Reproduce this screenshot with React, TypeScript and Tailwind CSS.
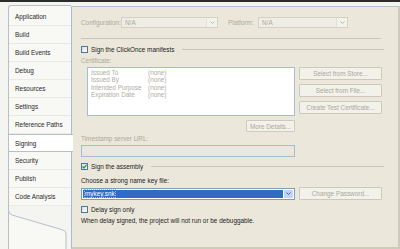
const font = { fontFamily: '"Liberation Sans", Arial, sans-serif' };

const tabs = [
  "Application",
  "Build",
  "Build Events",
  "Debug",
  "Resources",
  "Settings",
  "Reference Paths",
  "Signing",
  "Security",
  "Publish",
  "Code Analysis",
];

const CheckBox = ({ checked }: { checked?: boolean }) => (
  <div className="flex h-[7px] w-[7px] items-center justify-center border border-[#4a76a8] bg-gradient-to-br from-[#dcdcd4] to-white">
    {checked && (
      <svg width="5" height="5" viewBox="0 0 5 5">
        <path d="M0.5 2.5 L2 4 L4.5 1" stroke="#21a121" strokeWidth="1.2" fill="none" />
      </svg>
    )}
  </div>
);

const Arrow = ({ color = "#b9b7ac" }: { color?: string }) => (
  <svg width="5" height="3" viewBox="0 0 5 3">
    <path d="M0.5 0.5 L2.5 2.5 L4.5 0.5" stroke={color} strokeWidth="1" fill="none" />
  </svg>
);

const DisabledSelect = ({ w }: { w: string }) => (
  <div className={`flex h-[11px] ${w} items-center border border-[#d3d0c4] bg-[#efede5]`}>
    <span className="flex-1 pl-[3px] text-[#aca899]">N/A</span>
    <div className="flex h-full w-[11px] items-center justify-center border-l border-[#e2e0d7] bg-[#f3f2ec]">
      <Arrow />
    </div>
  </div>
);

const Btn = ({ label, w = "w-[83px]", h = "h-[13px]" }: { label: string; w?: string; h?: string }) => (
  <div className={`flex ${h} ${w} items-center justify-center rounded-[1px] border border-[#cdcabd] bg-[#f2f1ea] text-[#aca899]`}>
    {label}
  </div>
);

export default function App() {
  return (
    <div className="h-[249px] w-[400px] overflow-hidden bg-white text-[6.4px] leading-[7px]" style={font}>
      <div className="h-[2px] bg-[#2b2b2b]" />
      <div className="flex h-[247px] bg-[#f4f4f1]">
        {/* tab strip */}
        <div className="relative w-[71px] pl-[8px] pt-[3px]">
          <div className="h-full rounded-tl-[3px] border-l border-t border-[#b7bfc9] bg-[#f8f8f5]">
            <div className="pt-[2px]">
              {tabs.map((t) => (
                <div
                  key={t}
                  className={
                    t === "Signing"
                      ? "relative z-10 -mr-[2px] flex h-[18px] items-center border-y border-[#b7bfc9] bg-white pl-[6px] text-[#1a1a1a]"
                      : "flex h-[18px] items-center border-b border-[#ebeae4] pl-[6px] text-[#2a2a2a]"
                  }
                >
                  {t}
                </div>
              ))}
            </div>
          </div>
          <svg className="absolute left-0 top-[204px]" width="71" height="43" viewBox="0 0 71 43">
            <path d="M0 0 H8.5 V4 Q8.5 8 12 9 L63 24 Q66 25 66 28 V43 H71 V0 Z" fill="#f4f4f1" />
            <path d="M8.5 0 V4 Q8.5 8 12 9 L63 24 Q66 25 66 28 V43" stroke="#b7bfc9" strokeWidth="1" fill="none" />
          </svg>
        </div>

        {/* main panel */}
        <div className="mt-[4px] flex flex-1 flex-col border-l border-t border-r-2 border-b-2 border-l-[#a9bbd2] border-t-[#b4c3d6] border-r-[#cfcbbb] border-b-[#cfcbbb] bg-[#ebe8db] pl-[9px] text-[#222]">
          <div className="mt-[10px] flex items-center">
            <span className="w-[40px] text-[#aca899]">Configuration:</span>
            <DisabledSelect w="w-[97px]" />
            <span className="ml-[10px] w-[30px] text-[#aca899]">Platform:</span>
            <DisabledSelect w="w-[90px]" />
          </div>

          <div className="mt-[10px] h-[1px] w-[300px] bg-[#c9c6b8]" />

          <div className="mt-[7px] flex items-center">
            <CheckBox />
            <span className="ml-[3px]">Sign the ClickOnce manifests</span>
            <div className="ml-[8px] h-[1px] w-[202px] bg-[#c9c6b8]" />
          </div>

          <div className="mt-[4px] text-[#aca899]">Certificate:</div>

          <div className="mt-[3px] flex">
            <div className="ml-[6px] h-[49px] w-[208px] border border-[#a5bcd6] bg-white pl-[3px] pt-[1px] text-[#b0ad9f]">
              {[
                ["Issued To", "(none)"],
                ["Issued By", "(none)"],
                ["Intended Purpose", "(none)"],
                ["Expiration Date", "(none)"],
              ].map(([a, b]) => (
                <div key={a} className="flex h-[7.3px] items-center">
                  <span className="w-[57px]">{a}</span>
                  <span>{b}</span>
                </div>
              ))}
            </div>
            <div className="ml-[4px] flex flex-col gap-[4px]">
              <Btn label="Select from Store..." />
              <Btn label="Select from File..." />
              <Btn label="Create Test Certificate..." />
            </div>
          </div>

          <div className="mt-[4px] ml-[165px]">
            <Btn label="More Details..." w="w-[49px]" h="h-[12px]" />
          </div>

          <div className="mt-[3px] text-[#aca899]">Timestamp server URL:</div>
          <div className="mt-[3px] h-[12px] w-[214px] border border-[#a5bcd6] bg-[#ebe8db]" />

          <div className="mt-[6px] flex items-center">
            <CheckBox checked />
            <span className="ml-[3px]">Sign the assembly</span>
            <div className="ml-[8px] h-[1px] w-[233px] bg-[#c9c6b8]" />
          </div>

          <div className="mt-[7px]">Choose a strong name key file:</div>

          <div className="mt-[3px] flex items-center">
            <div className="flex h-[12px] w-[214px] items-center border border-[#7f9db9] bg-white p-[1px]">
              <div className="flex h-full flex-1 items-center bg-[#316ac5] pl-[2px]">
                <span className="text-white outline outline-1 outline-dotted outline-[#9fb8e0]">mykey.snk</span>
              </div>
              <div className="ml-[1px] flex h-full w-[9px] items-center justify-center rounded-[1px] bg-[#c1d3fb]">
                <Arrow color="#4d6185" />
              </div>
            </div>
            <div className="ml-[4px]">
              <Btn label="Change Password..." />
            </div>
          </div>

          <div className="mt-[6px] flex items-center">
            <CheckBox />
            <span className="ml-[3px]">Delay sign only</span>
          </div>

          <div className="mt-[4px]">When delay signed, the project will not run or be debuggable.</div>
        </div>
      </div>
    </div>
  );
}
